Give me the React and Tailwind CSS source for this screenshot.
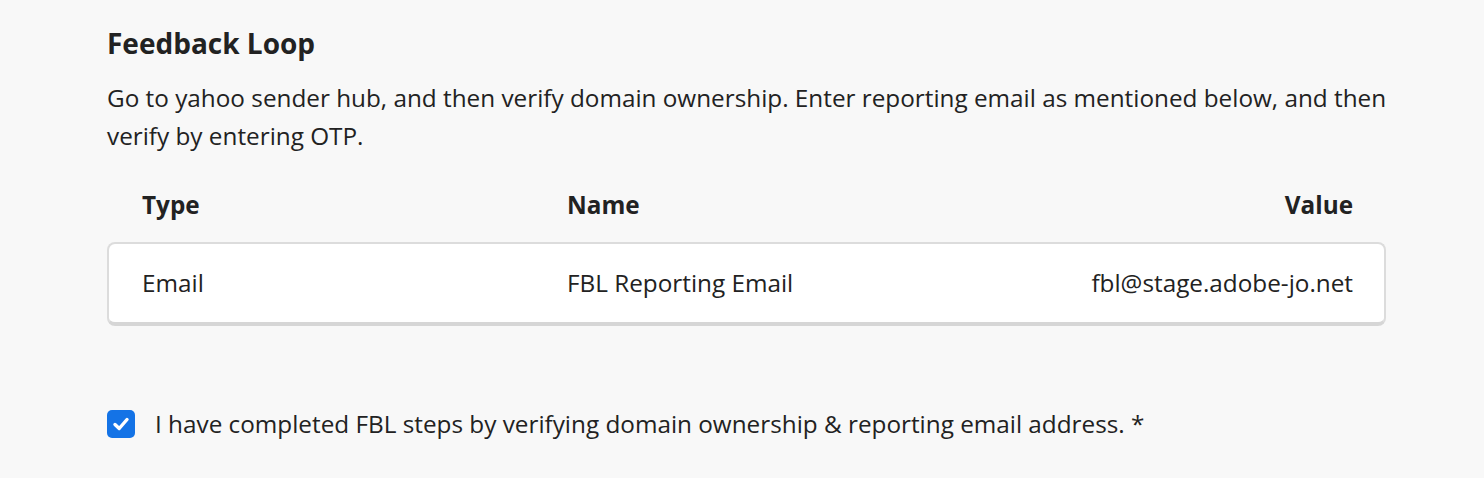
import React from "react";

export default function App() {
  return (
    <div className="w-[1484px] h-[478px] bg-[#f8f8f8] text-[#222222] overflow-hidden" style={{ fontFamily: "'Open Sans', sans-serif" }}>
      <div className="pl-[107px] pr-[94px] pt-[23px]">
        <h2 className="text-[28px] font-bold leading-[40px] text-[#222222]">Feedback Loop</h2>
        <p className="mt-[16px] text-[24.3px] leading-[38px] text-[#222222]">
          Go to yahoo sender hub, and then verify domain ownership. Enter reporting email as mentioned below, and then verify by entering OTP.
        </p>
        <div className="mt-[26px] w-[1279px]">
          <div className="grid grid-cols-[425px_1fr_auto] pl-[35px] pr-[33px] h-[48px] items-center text-[24.3px] font-bold">
            <div>Type</div>
            <div>Name</div>
            <div className="text-right">Value</div>
          </div>
          <div className="mt-[13px] h-[84px] bg-white border-2 border-[#dcdcdc] border-b-[4px] border-b-[#d6d6d6] rounded-[8px] grid grid-cols-[425px_1fr_auto] items-center pl-[33px] pr-[31px] text-[24.3px]">
            <div>Email</div>
            <div>FBL Reporting Email</div>
            <div className="text-right">fbl@stage.adobe-jo.net</div>
          </div>
        </div>
        <label className="mt-[80px] flex items-center gap-[20px] text-[24.3px] leading-[36px]">
          <span className="w-[28px] h-[28px] rounded-[5px] bg-[#1473e6] flex items-center justify-center">
            <svg width="20" height="20" viewBox="0 0 20 20" fill="none">
              <path d="M4 10.5 L8.2 14.5 L16 5.5" stroke="white" strokeWidth="3.4" strokeLinecap="round" strokeLinejoin="round" />
            </svg>
          </span>
          <span>I have completed FBL steps by verifying domain ownership &amp; reporting email address. *</span>
        </label>
      </div>
    </div>
  );
}
